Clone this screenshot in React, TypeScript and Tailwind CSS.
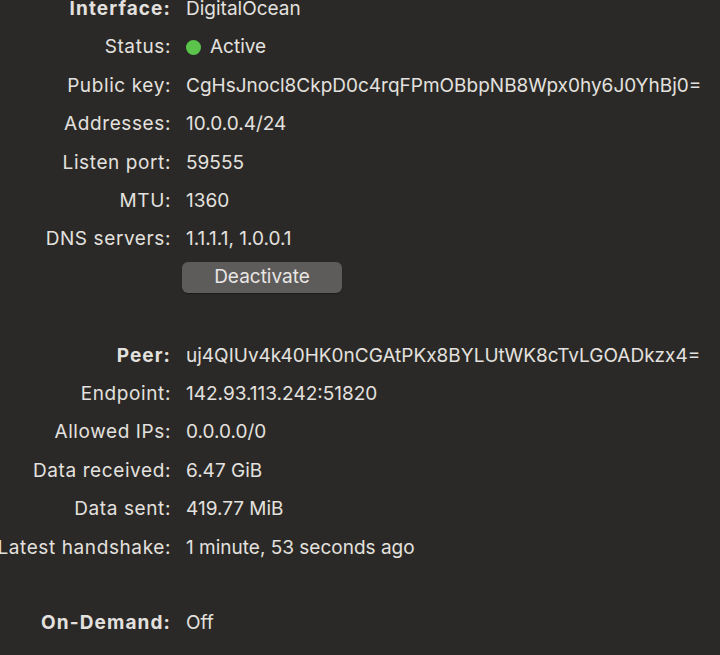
import React from 'react';

type Row = { label: string; value: React.ReactNode; bold?: boolean };

const iface: Row[] = [
  { label: 'Interface:', value: 'DigitalOcean', bold: true },
  {
    label: 'Status:',
    value: (
      <span className="flex items-center gap-[9px]">
        <span className="w-[15px] h-[15px] rounded-full bg-[#5ac44b]" />
        Active
      </span>
    ),
  },
  { label: 'Public key:', value: 'CgHsJnocl8CkpD0c4rqFPmOBbpNB8Wpx0hy6J0YhBj0=' },
  { label: 'Addresses:', value: '10.0.0.4/24' },
  { label: 'Listen port:', value: '59555' },
  { label: 'MTU:', value: '1360' },
  { label: 'DNS servers:', value: '1.1.1.1, 1.0.0.1' },
];

const peer: Row[] = [
  { label: 'Peer:', value: 'uj4QIUv4k40HK0nCGAtPKx8BYLUtWK8cTvLGOADkzx4=', bold: true },
  { label: 'Endpoint:', value: '142.93.113.242:51820' },
  { label: 'Allowed IPs:', value: '0.0.0.0/0' },
  { label: 'Data received:', value: '6.47 GiB' },
  { label: 'Data sent:', value: '419.77 MiB' },
  { label: 'Latest handshake:', value: '1 minute, 53 seconds ago' },
];

function InfoRow({ label, value, bold }: Row) {
  return (
    <div className="flex items-center h-[38.4px]">
      <div
        className={`w-[171px] shrink-0 flex justify-end whitespace-nowrap ${
          bold ? 'font-bold tracking-[1.1px]' : 'tracking-[0.6px]'
        }`}
      >
        {label}
      </div>
      <div className="pl-[15px] whitespace-nowrap">{value}</div>
    </div>
  );
}

export default function App() {
  return (
    <div
      className="w-[720px] h-[655px] overflow-hidden bg-[#2b2927] text-[#e3e1df] text-[19px]"
      style={{ fontFamily: 'Inter, "Noto Sans", sans-serif' }}
    >
      <div className="-mt-[10px] flex flex-col">
        {iface.map((r) => (
          <InfoRow key={r.label} {...r} />
        ))}
        <div className="flex items-center h-[38px]">
          <div className="w-[182px] shrink-0" />
          <button className="w-[160px] h-[31px] rounded-[6px] bg-[#5e5c5a] text-[#e8e6e4] shadow-[0_1px_1px_rgba(0,0,0,0.35)]">
            Deactivate
          </button>
        </div>
        <div className="h-[40px]" />
        {peer.map((r) => (
          <InfoRow key={r.label} {...r} />
        ))}
        <div className="h-[37px]" />
        <InfoRow label="On-Demand:" value="Off" bold />
      </div>
    </div>
  );
}
